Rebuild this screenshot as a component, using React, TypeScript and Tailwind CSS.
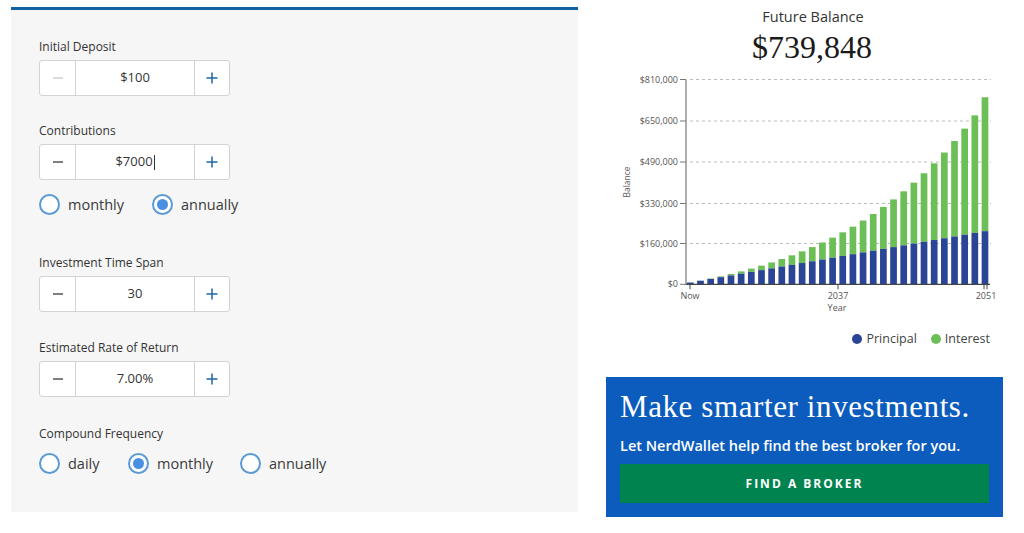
import React from 'react';

const SANS = { fontFamily: '"Open Sans", "Liberation Sans", sans-serif' };
const SERIF = { fontFamily: '"Liberation Serif", "DejaVu Serif", serif' };

function MinusIcon({ faded }: { faded?: boolean }) {
  return (
    <svg width="12" height="12" viewBox="0 0 12 12">
      <line x1="1" y1="6" x2="11" y2="6" stroke={faded ? '#cfcfcf' : '#555'} strokeWidth="1.5" />
    </svg>
  );
}

function PlusIcon() {
  return (
    <svg width="12" height="12" viewBox="0 0 12 12">
      <line x1="0.5" y1="6" x2="11.5" y2="6" stroke="#2a6eab" strokeWidth="1.6" />
      <line x1="6" y1="0.5" x2="6" y2="11.5" stroke="#2a6eab" strokeWidth="1.6" />
    </svg>
  );
}

function Stepper({ value, faded, caret }: { value: string; faded?: boolean; caret?: boolean }) {
  return (
    <div className="flex h-[36px] w-[191px] rounded-[3px] border border-[#d3d3d3] bg-white">
      <div className="flex w-[36px] items-center justify-center border-r border-[#d3d3d3]">
        <MinusIcon faded={faded} />
      </div>
      <div className="flex flex-1 items-center justify-center text-[13px] text-[#333]">
        {value}
        {caret && <span className="ml-px inline-block h-[15px] w-px bg-[#333]" />}
      </div>
      <div className="flex w-[35px] items-center justify-center border-l border-[#d3d3d3]">
        <PlusIcon />
      </div>
    </div>
  );
}

function Radio({ label, checked, width }: { label: string; checked?: boolean; width: string }) {
  return (
    <div className={`flex items-center ${width}`}>
      <span className="flex h-[21px] w-[21px] items-center justify-center rounded-full border-2 border-[#5b9bd5] bg-white">
        {checked && <span className="h-[11px] w-[11px] rounded-full bg-[#4a90e2]" />}
      </span>
      <span className="ml-[8px] text-[14.5px] text-[#3a3a3a]">{label}</span>
    </div>
  );
}

function Label({ children }: { children: React.ReactNode }) {
  return <div className="h-[16px] text-[12px] leading-[16px] text-[#333]">{children}</div>;
}

const PRINCIPAL = '#2b4596';
const INTEREST = '#6cbf56';

function BalanceChart() {
  // yearly balances: $100 start, $7000 per year, 7% compounded monthly
  const f = Math.pow(1 + 0.07 / 12, 12);
  const bars: { p: number; t: number }[] = [];
  let bal = 100;
  for (let i = 0; i < 30; i++) {
    bal = i === 0 ? 7100 : bal * f + 7000;
    bars.push({ p: 100 + 7000 * (i + 1), t: i === 0 ? 7100 : bal });
  }
  const scale = 739848 / bars[29].t;
  bars.forEach((b, i) => {
    if (i > 0) b.t = b.p + (b.t - b.p) * scale;
  });
  bars[29].t = 739848;

  const ox = 606;
  const oy = 70;
  const base = 284.3 - oy;
  const h = (v: number) => (v / 810000) * 204.8;
  const grid = [
    { y: 79.5, l: '$810,000' },
    { y: 121, l: '$650,000' },
    { y: 162, l: '$490,000' },
    { y: 203.5, l: '$330,000' },
    { y: 243.5, l: '$160,000' },
    { y: 284.3, l: '$0' },
  ];

  return (
    <svg width="412" height="248" viewBox="0 0 412 248" className="block">
      {grid.map((g) => (
        <g key={g.l}>
          {g.l !== '$0' && (
            <line x1={84} x2={385} y1={g.y - oy} y2={g.y - oy} stroke="#bdbdbd" strokeWidth="1" strokeDasharray="3 3" />
          )}
          <line x1={74} x2={80} y1={g.y - oy} y2={g.y - oy} stroke="#777" strokeWidth="1" />
          <text x={72} y={g.y - oy + 3} textAnchor="end" fontSize="9" fill="#555" style={SANS}>
            {g.l}
          </text>
        </g>
      ))}
      {bars.map((b, i) => {
        const x = 687 - ox + i * 10.16;
        const hp = h(b.p);
        const ht = h(b.t);
        return (
          <g key={i}>
            <rect x={x} y={base - ht} width={6.7} height={ht - hp} fill={INTEREST} />
            <rect x={x} y={base - hp} width={6.7} height={hp} fill={PRINCIPAL} />
          </g>
        );
      })}
      <line x1={80} x2={80} y1={79.5 - oy} y2={base} stroke="#777" strokeWidth="1.2" />
      <line x1={80} x2={384} y1={base} y2={base} stroke="#444" strokeWidth="1.2" />
      <line x1={690 - ox} x2={690 - ox} y1={base} y2={base + 5} stroke="#444" strokeWidth="1" />
      <line x1={838 - ox} x2={838 - ox} y1={base} y2={base + 5} stroke="#444" strokeWidth="1" />
      <line x1={984 - ox} x2={984 - ox} y1={base} y2={base + 5} stroke="#444" strokeWidth="1" />
      <line x1={987 - ox} x2={987 - ox} y1={base} y2={base + 5} stroke="#444" strokeWidth="1" />
      <text x={690 - ox} y={299 - oy} textAnchor="middle" fontSize="9" fill="#555" style={SANS}>Now</text>
      <text x={838 - ox} y={299 - oy} textAnchor="middle" fontSize="9" fill="#555" style={SANS}>2037</text>
      <text x={986 - ox} y={299 - oy} textAnchor="middle" fontSize="9" fill="#555" style={SANS}>2051</text>
      <text x={837 - ox} y={311 - oy} textAnchor="middle" fontSize="9" fill="#555" style={SANS}>Year</text>
      <text
        x={0}
        y={0}
        transform={`translate(${630 - ox} ${182 - oy}) rotate(-90)`}
        textAnchor="middle"
        fontSize="8.5"
        fill="#555"
        style={SANS}
      >
        Balance
      </text>
    </svg>
  );
}

export default function App() {
  return (
    <div className="flex h-[533px] w-[1024px] overflow-hidden bg-white" style={SANS}>
      <div className="ml-[11px] mt-[7px] h-[505px] w-[567px] border-t-[3px] border-[#13609f] bg-[#f6f6f6] pl-[28px]">
        <div className="mt-[29px]">
          <Label>Initial Deposit</Label>
          <div className="mt-[5px]">
            <Stepper value="$100" faded />
          </div>
        </div>
        <div className="mt-[27px]">
          <Label>Contributions</Label>
          <div className="mt-[5px]">
            <Stepper value="$7000" caret />
          </div>
          <div className="mt-[14px] flex">
            <Radio label="monthly" width="w-[113px]" />
            <Radio label="annually" checked width="w-[120px]" />
          </div>
        </div>
        <div className="mt-[39px]">
          <Label>Investment Time Span</Label>
          <div className="mt-[5px]">
            <Stepper value="30" />
          </div>
        </div>
        <div className="mt-[28px]">
          <Label>Estimated Rate of Return</Label>
          <div className="mt-[5px]">
            <Stepper value="7.00%" />
          </div>
        </div>
        <div className="mt-[29px]">
          <Label>Compound Frequency</Label>
          <div className="mt-[11px] flex">
            <Radio label="daily" width="w-[89px]" />
            <Radio label="monthly" checked width="w-[112px]" />
            <Radio label="annually" width="w-[120px]" />
          </div>
        </div>
      </div>

      <div className="ml-[28px] flex w-[412px] flex-col">
        <div className="mt-[7px] pl-[2px] text-center text-[14.5px] leading-[20px] text-[#333]">Future Balance</div>
        <div className="mt-[2px] text-center text-[32px] leading-[36px] text-[#1a1a1a]" style={SERIF}>
          $739,848
        </div>
        <div className="mt-[5px]">
          <BalanceChart />
        </div>
        <div className="mt-[13px] flex w-[384px] justify-end gap-[14px] text-[12.5px] leading-[16px] text-[#444]">
          <div className="flex items-center gap-[4px]">
            <span className="h-[10px] w-[10px] rounded-full bg-[#2b4596]" />
            <span>Principal</span>
          </div>
          <div className="flex items-center gap-[4px]">
            <span className="h-[10px] w-[10px] rounded-full bg-[#6cbf56]" />
            <span>Interest</span>
          </div>
        </div>
        <div className="mt-[30px] h-[140px] w-[397px] bg-[#0b5cbd] px-[14px] pt-[14px]">
          <div className="text-[31px] leading-[32px] tracking-[0.6px] text-white" style={SERIF}>
            Make smarter investments.
          </div>
          <div className="mt-[14px] text-[14.5px] font-semibold leading-[18px] text-white">
            Let NerdWallet help find the best broker for you.
          </div>
          <div className="mt-[9px] flex h-[39px] w-[369px] items-center justify-center bg-[#00834f] text-[12px] font-bold tracking-[2px] text-white">
            FIND A BROKER
          </div>
        </div>
      </div>
    </div>
  );
}
